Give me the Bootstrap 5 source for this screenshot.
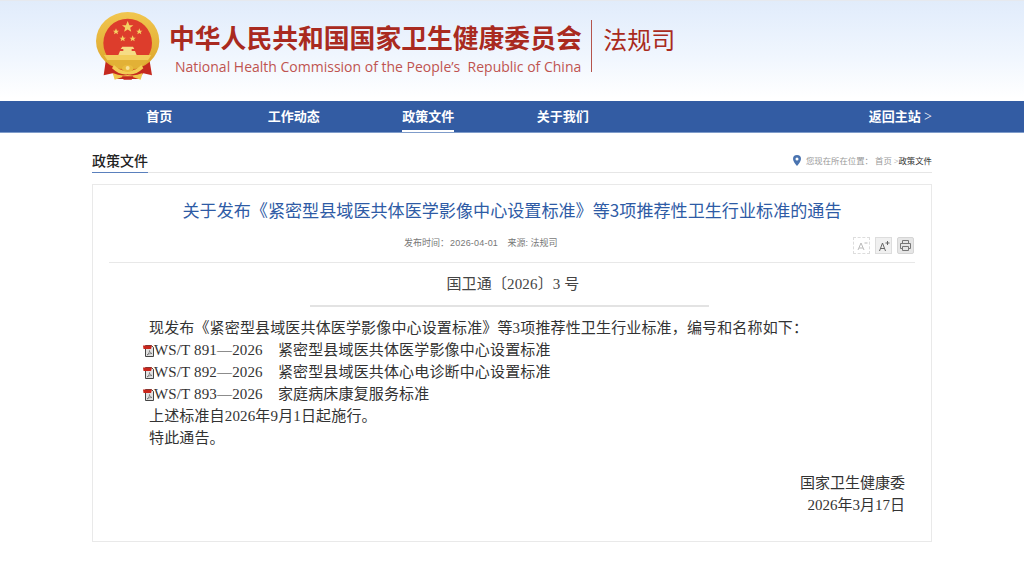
<!DOCTYPE html>
<html lang="zh">
<head>
<meta charset="utf-8">
<title>法规司</title>
<link href="https://cdn.jsdelivr.net/npm/bootstrap@5.3.0/dist/css/bootstrap.min.css" rel="stylesheet">
<style>
html,body{height:563px;overflow:hidden}
body{font-family:"Liberation Serif","Noto Sans CJK SC",serif;background:#fff;color:#333}
.wrap-w{width:840px;margin:0 auto}
.top-band{height:101px;background:linear-gradient(#e1ecfa 0,#e4eefc 12%,#f0f6fe 55%,#fff 97%);border-top:1px solid #e6e9ee}
.emblem{width:80px;height:85px;margin:4px -1px 0 -2px;flex:none}
.word-cn{font-family:"Noto Sans CJK SC",sans-serif;font-weight:700;font-size:25.8px;line-height:30px;color:#a92a20;white-space:nowrap;margin-top:21px;width:412px}
.word-en{font-family:"Open Sans","Noto Sans",sans-serif;font-size:14px;line-height:18px;color:#bf5450;white-space:nowrap;margin:6px 0 0 6px}
.word-div{width:1px;height:52px;background:#b5544c;margin:19px 11px 0 10px;flex:none}
.word-dept{font-family:"Noto Sans CJK SC",sans-serif;font-size:24px;line-height:30px;color:#a92a20;margin-top:23px}
.main-nav{height:32px;background:#335ca3;border-bottom:1px solid #7f9cca}
.nav-cell{width:134.5px;text-align:center;color:#fff;text-decoration:none;font-weight:700;font-size:13px;line-height:31px;height:31px;display:block}
.nav-cell span{display:inline-block;height:31px}
.nav-cell.on span{border-bottom:2px solid #fff}
.nav-back{color:#fff;text-decoration:none;font-weight:700;font-size:13px;line-height:31px}
.nav-back em{font-style:normal;font-weight:400;font-size:14px}
.crumb-row{height:28px;margin-top:12px;border-bottom:1px solid #e6e6e6}
.crumb-title{font-size:14px;font-weight:500;color:#222;line-height:20px;padding:7px 0 0;height:28px;border-bottom:1px solid #5a80bd}
.crumb-path{font-size:8.4px;color:#999;line-height:14px;padding-top:10px}
.crumb-path b{font-weight:400;color:#333}
.crumb-gt{margin:0 0 0 2px}
.pin{width:8px;height:11px;margin-right:5px}
.doc-box{height:358px;margin-top:11px;border:1px solid #e9e9e9;padding:0 16px}
.doc-title{font-family:"Noto Sans CJK SC",sans-serif;font-size:17.1px;line-height:24px;color:#2e5ba5;font-weight:400;text-align:center;margin:13px 0 0}
.meta-row{height:29px;margin-top:12px;border-bottom:1px solid #e8e8e8}
.meta-text{font-family:"Liberation Sans","Noto Sans CJK SC",sans-serif;font-size:9px;color:#777;line-height:14px;padding-left:295px;padding-top:2px}
.meta-text i{font-style:normal;margin-left:1px;margin-right:7px;letter-spacing:.2px}
.tool-row{padding-top:3px;margin-right:1px}
.tool-btn{width:17px;height:17px;margin-left:5px;background:#f0f0f0;border:1px solid #ddd;display:flex;align-items:center;justify-content:center}
.tool-btn.off{background:#fff;border:1px dashed #ddd}
.tool-btn.round{border-radius:2px;background:#e6e6e6;border-color:#d5d5d5}
.doc-no{font-size:15px;line-height:22px;letter-spacing:.15px;color:#444;text-align:center;margin:10px 0 0 0;padding-left:2px}
.doc-rule{width:399px;height:2px;background:#e3e3e3;margin:10px 0 0 201px}
.doc-body{font-size:15px;line-height:22px;letter-spacing:.15px;color:#333;margin-top:10px;padding-left:34px;padding-right:10px}
.doc-body p{margin:0;padding-left:6px;white-space:pre}
.doc-body .fl{padding-left:0;display:flex;align-items:center}
.doc-body .gap-line{height:23px}
.pdf-ico{width:11px;height:14px;flex:none}
.doc-body .sign{text-align:right;padding:0;letter-spacing:0}
</style>
</head>
<body>
<header class="top-band">
  <div class="wrap-w d-flex">
    <svg class="emblem" viewBox="0 0 240 255" aria-label="国徽">
      <defs>
        <linearGradient id="rim" x1="0" y1="0" x2="0" y2="1"><stop offset="0" stop-color="#f1c64f"/><stop offset="1" stop-color="#dca52a"/></linearGradient>
        <clipPath id="sky"><rect x="0" y="0" width="240" height="150"/></clipPath>
        <polygon id="st" points="0,-10 2.900,-3.100 9.500,-3.100 4.200,1.200 5.900,8.100 0,4.200 -5.900,8.100 -4.200,1.200 -9.500,-3.100 -2.900,-3.100"/>
      </defs>
      <path d="M48 162 L41 211 L68 205 L82 222 L145 222 L160 205 L186 211 L178 162Z" fill="#c5291f"/>
      <ellipse cx="113" cy="108" rx="95" ry="87" fill="url(#rim)"/>
      <circle cx="113" cy="114" r="73" fill="#dd3d2c" clip-path="url(#sky)"/>
      <path d="M42 150h142l-10 16H52z" fill="#f2cd5c"/>
      <path d="M52 166h122q-12 20-36 24H88q-24-4-36-24z" fill="#e2b136"/>
      <g fill="#f4d163">
        <use href="#st" transform="translate(113 66) scale(1.800)"/>
        <use href="#st" transform="translate(78 80)"/>
        <use href="#st" transform="translate(148 80)"/>
        <use href="#st" transform="translate(98 101)"/>
        <use href="#st" transform="translate(128 101)"/>
      </g>
      <path d="M97 125h32l4 7h-8v6h10l5 12H85l5-12h10v-6h-8z" fill="#f6dc85"/>
      <path d="M72 180 Q92 200 113 196 Q134 200 154 180 L160 190 Q136 212 113 208 Q90 212 66 190Z" fill="#f3cc55"/>
      <ellipse cx="113" cy="190" rx="17" ry="11" fill="#e9bb3e"/>
      <circle cx="113" cy="189" r="6" fill="#f8e29a"/>
      <path d="M68 204 Q90 214 113 210 Q136 214 158 204 L152 224 L128 216 H98 L74 224Z" fill="#f0c64c"/>
      <path d="M96 214h34l-5 10h-24z" fill="#c5291f"/>
    </svg>
    <div>
      <div class="word-cn">中华人民共和国国家卫生健康委员会</div>
      <div class="word-en">National Health Commission of the People’s&nbsp; Republic of China</div>
    </div>
    <div class="word-div"></div>
    <div class="word-dept">法规司</div>
  </div>
</header>
<nav class="main-nav">
  <div class="wrap-w d-flex justify-content-between">
    <div class="d-flex">
      <a class="nav-cell" href="#"><span>首页</span></a>
      <a class="nav-cell" href="#"><span>工作动态</span></a>
      <a class="nav-cell on" href="#"><span>政策文件</span></a>
      <a class="nav-cell" href="#"><span>关于我们</span></a>
    </div>
    <a class="nav-back" href="#">返回主站 <em>&gt;</em></a>
  </div>
</nav>
<main class="wrap-w">
  <div class="crumb-row d-flex justify-content-between">
    <div class="crumb-title">政策文件</div>
    <div class="crumb-path d-flex align-items-start">
      <svg class="pin" viewBox="0 0 8 11"><path fill-rule="evenodd" d="M4 0a4 4 0 0 1 4 4c0 2.500-2.500 5-4 7C2.500 9 0 6.500 0 4a4 4 0 0 1 4-4zm0 2.500a1.500 1.500 0 1 0 0 3 1.500 1.500 0 0 0 0-3z" fill="#4a74b0"/></svg>
      <span>您现在所在位置：&nbsp;首页<span class="crumb-gt">&gt;</span><b>政策文件</b></span>
    </div>
  </div>
  <article class="doc-box">
    <h1 class="doc-title">关于发布《紧密型县域医共体医学影像中心设置标准》等3项推荐性卫生行业标准的通告</h1>
    <div class="meta-row d-flex justify-content-between align-items-start">
      <div class="meta-text">发布时间：<i>2026-04-01</i> 来源: 法规司</div>
      <div class="d-flex tool-row">
        <div class="tool-btn off"><svg width="12" height="12" viewBox="0 0 12 12"><path d="M2 10 5 3l3 7M3 8h4M8.500 3h3" fill="none" stroke="#bbb"/></svg></div>
        <div class="tool-btn"><svg width="12" height="12" viewBox="0 0 12 12"><path d="M1.500 11 4.500 3l3 8M2.500 8.500h4M9.500 1v4M7.500 3h4" fill="none" stroke="#666"/></svg></div>
        <div class="tool-btn round"><svg width="13" height="13" viewBox="0 0 13 13"><path d="M3.500 4V1.500h6V4M1.500 4.500h10v5h-2M3.500 9.500h-2v-5M3.500 7.500h6v4h-6z" fill="none" stroke="#777"/></svg></div>
      </div>
    </div>
    <div class="doc-no">国卫通〔2026〕3 号</div>
    <div class="doc-rule"></div>
    <div class="doc-body">
      <p>现发布《紧密型县域医共体医学影像中心设置标准》等3项推荐性卫生行业标准，编号和名称如下：</p>
      <p class="fl"><svg class="pdf-ico" viewBox="0 0 11 14"><path d="M2.500 2.500h6l2 2v9h-8z" fill="#e2e2e2" stroke="#444"/><path d="M0 2.500h9l-1 3.500H.500z" fill="#c9261c"/><path d="M4 12c2-1.500 2.500-3 2.500-4.500 0 1.500 1 2.500 2.500 3-2 0-3.500.500-5 1.500z" fill="none" stroke="#666" stroke-width=".7"/></svg><span>WS/T 891—2026　紧密型县域医共体医学影像中心设置标准</span></p>
      <p class="fl"><svg class="pdf-ico" viewBox="0 0 11 14"><path d="M2.500 2.500h6l2 2v9h-8z" fill="#e2e2e2" stroke="#444"/><path d="M0 2.500h9l-1 3.500H.500z" fill="#c9261c"/><path d="M4 12c2-1.500 2.500-3 2.500-4.500 0 1.500 1 2.500 2.500 3-2 0-3.500.500-5 1.500z" fill="none" stroke="#666" stroke-width=".7"/></svg><span>WS/T 892—2026　紧密型县域医共体心电诊断中心设置标准</span></p>
      <p class="fl"><svg class="pdf-ico" viewBox="0 0 11 14"><path d="M2.500 2.500h6l2 2v9h-8z" fill="#e2e2e2" stroke="#444"/><path d="M0 2.500h9l-1 3.500H.500z" fill="#c9261c"/><path d="M4 12c2-1.500 2.500-3 2.500-4.500 0 1.500 1 2.500 2.500 3-2 0-3.500.500-5 1.500z" fill="none" stroke="#666" stroke-width=".7"/></svg><span>WS/T 893—2026　家庭病床康复服务标准</span></p>
      <p>上述标准自2026年9月1日起施行。</p>
      <p>特此通告。</p>
      <p class="gap-line">&nbsp;</p>
      <p class="sign">国家卫生健康委</p>
      <p class="sign">2026年3月17日</p>
    </div>
  </article>
</main>
</body>
</html>
